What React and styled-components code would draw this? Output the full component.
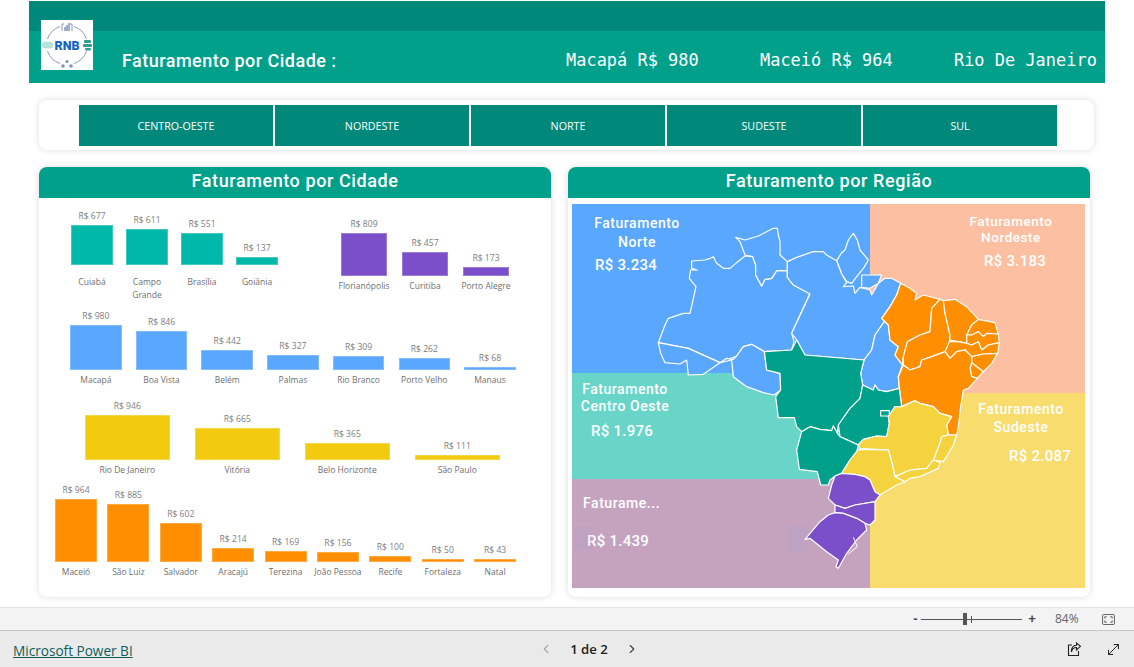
import React from "react"
import styled, { createGlobalStyle } from "styled-components"
import { ChevronLeft, ChevronRight, MoveDiagonal } from "lucide-react"

const teal = "#00a08b"
const darkTeal = "#00897b"
const blue = "#5aa7ff"
const orange = "#ff8f00"
const purple = "#7b4fc9"

const GlobalStyle = createGlobalStyle`
  html, body { margin: 0; padding: 0; background: #fff; }
  * { box-sizing: border-box; }
`

const Page = styled.div`
  width: 1134px;
  height: 667px;
  display: flex;
  flex-direction: column;
  overflow: hidden;
  font-family: "Open Sans", sans-serif;
`
const Main = styled.main`
  flex: 1;
  padding-top: 1px;
`
const Header = styled.header`
  position: relative;
  width: 1076px;
  height: 82px;
  margin-left: 29px;
  overflow: hidden;
  display: flex;
  flex-direction: column;
`
const HeaderTop = styled.div`
  height: 30px;
  background: ${darkTeal};
`
const HeaderBottom = styled.div`
  flex: 1;
  background: ${teal};
  display: flex;
  align-items: flex-start;
  color: #fff;
`
const HeaderTitle = styled.div`
  margin: 19px 0 0 93px;
  width: 444px;
  flex: none;
  font: 500 18px/22px Roboto, sans-serif;
  letter-spacing: 0.47px;
`
const Ticker = styled.div`
  margin-top: 18px;
  font: 400 16.9px/22px "DejaVu Sans Mono", monospace;
  letter-spacing: 0.04px;
  white-space: pre;
`
const LogoBox = styled.div`
  position: absolute;
  left: 12px;
  top: 19px;
  width: 52px;
  height: 50px;
  background: #fff;
`
const SlicerCard = styled.section`
  margin: 17px 0 0 39px;
  width: 1055px;
  height: 50px;
  padding: 5px 37px 0 40px;
  background: #fff;
  border-radius: 8px;
  box-shadow: 0 0 7px rgba(0, 0, 0, 0.14);
`
const SlicerRow = styled.div`
  display: grid;
  grid-template-columns: repeat(5, 1fr);
  gap: 2px;
  height: 41px;
`
const SlicerButton = styled.div`
  background: ${darkTeal};
  color: #fff;
  font-size: 10.7px;
  display: flex;
  align-items: center;
  justify-content: center;
`
const Cards = styled.div`
  display: flex;
  gap: 17px;
  margin: 17px 0 0 39px;
`
const Card = styled.section`
  width: ${p => p.$width}px;
  height: 430px;
  background: #fff;
  border-radius: 8px;
  box-shadow: 0 0 7px rgba(0, 0, 0, 0.14);
  display: flex;
  flex-direction: column;
`
const CardTitle = styled.h2`
  margin: 0;
  height: 31px;
  flex: none;
  background: ${teal};
  color: #fff;
  border-radius: 8px 8px 0 0;
  text-align: center;
  font: 500 18px/28px Roboto, sans-serif;
  letter-spacing: 0.58px;
`
const ChartArea = styled.div`
  padding-top: 10px;
`
const ChartRow = styled.div`
  display: flex;
  height: ${p => p.$height}px;
`
const Chart = styled.div`
  display: flex;
  margin-left: ${p => p.$left}px;
`
const Column = styled.div`
  width: ${p => p.$pitch}px;
  display: flex;
  flex-direction: column;
  align-items: center;
`
const Plot = styled.div`
  height: ${p => p.$height}px;
  flex: none;
  display: flex;
  flex-direction: column;
  justify-content: flex-end;
  align-items: center;
`
const BarValue = styled.div`
  font-size: 8.6px;
  line-height: 12px;
  margin-bottom: 3px;
  color: #7d7d7d;
  white-space: nowrap;
`
const Bar = styled.div`
  width: ${p => p.$width}px;
  flex: none;
  background: ${p => p.$color};
  box-shadow: inset 0 0 0 1px rgba(255, 255, 255, 0.25);
`
const BarLabel = styled.div`
  margin-top: ${p => p.$gap}px;
  font-size: 8.5px;
  line-height: 13px;
  color: #6f6f6f;
  text-align: center;
  white-space: pre;
`
const Treemap = styled.div`
  position: relative;
  margin: 6px 0 0 4px;
  width: 513px;
  height: 384px;
  display: flex;
`
const TileColumn = styled.div`
  width: ${p => p.$width}px;
  display: flex;
  flex-direction: column;
`
const Tile = styled.div`
  height: ${p => p.$height}px;
  background: ${p => p.$bg};
  padding: ${p => p.$top}px 0 0 ${p => p.$left}px;
  color: #fff;
`
const TileTitle = styled.div`
  width: 100px;
  font: 500 ${p => p.$size || 14}px/${p => p.$line}px Roboto, sans-serif;
  letter-spacing: 0.55px;
  white-space: nowrap;
  display: flex;
  flex-direction: column;
  align-items: ${p => (p.$start ? "flex-start" : "center")};
`
const TileValue = styled.div`
  margin: ${p => p.$gap}px 0 0 ${p => p.$indent}px;
  font: 500 15px/20px Roboto, sans-serif;
  letter-spacing: 0.25px;
`
const MapSvg = styled.svg`
  position: absolute;
  inset: 0;
  width: 513px;
  height: 384px;
`
const ZoomBar = styled.div`
  height: 23px;
  flex: none;
  background: #f3f3f3;
  border-top: 1px solid #e2e2e2;
  display: flex;
  align-items: center;
  padding-left: 910px;
  color: #444;
`
const ZoomSign = styled.span`
  width: ${p => p.$width}px;
  font: 700 13px/16px "Liberation Sans", sans-serif;
  text-align: center;
`
const Slider = styled.div`
  position: relative;
  width: 101px;
  height: 1px;
  background: #555;
`
const SliderThumb = styled.span`
  position: absolute;
  left: 42px;
  top: -6px;
  width: 4px;
  height: 12px;
  background: #555;
`
const SliderTick = styled.span`
  position: absolute;
  left: 50px;
  top: -3px;
  width: 1px;
  height: 7px;
  background: #555;
`
const ZoomPercent = styled.span`
  margin-left: 13px;
  width: 36px;
  font: 400 12px/16px "Open Sans", sans-serif;
  color: #666;
`
const FitIcon = styled.svg`
  margin-left: 11px;
  width: 13px;
  height: 11px;
`
const Footer = styled.footer`
  height: 37px;
  flex: none;
  background: #eaeaea;
  border-top: 1px solid #c8c8c8;
  display: grid;
  grid-template-columns: 539px 100px 1fr;
  align-items: center;
`
const BrandLink = styled.a`
  margin: 2px 0 0 13px;
  font-size: 13.6px;
  color: #0f5f58;
  text-decoration: underline;
  white-space: nowrap;
`
const Pager = styled.div`
  display: flex;
  align-items: center;
  justify-content: space-between;
  font-size: 13.2px;
  font-weight: 600;
  color: #222;
  svg:first-child { color: #a8a8a8; }
  svg:last-child { color: #444; }
`
const FooterActions = styled.div`
  display: flex;
  justify-content: flex-end;
  align-items: center;
  gap: 24px;
  padding-right: 12px;
  color: #222;
`

const Logo = () => (
  <svg viewBox="0 0 52 50" width="52" height="50">
    <g fill="none" stroke="#6b7fa8" strokeWidth="0.8">
      <path d="M19 6.500A20 20 0 0 0 6.500 19" />
      <path d="M33 6.500A20 20 0 0 1 45.500 19" />
      <path d="M6.500 31A20 20 0 0 0 19 43.500" />
      <path d="M45.500 31A20 20 0 0 1 33 43.500" />
      <path d="M21 11V4h2M29 4h2v7" />
    </g>
    <g fill="#3f5f95">
      <rect x="23.500" y="7" width="1" height="4" />
      <rect x="25.500" y="5" width="1" height="6" />
      <rect x="27.500" y="3" width="1" height="8" />
    </g>
    <g fill="#b4e2dc">
      <circle cx="4.500" cy="25" r="3.500" />
      <circle cx="8.500" cy="25" r="3.500" />
    </g>
    <rect x="43" y="20" width="7" height="3" rx="1" fill="#2f9e94" />
    <rect x="42" y="24" width="9" height="3" rx="1" fill="#2f9e94" />
    <rect x="44" y="28" width="6" height="2.500" rx="1" fill="#2f9e94" />
    <g fill="#8193b5">
      <circle cx="22" cy="46" r="1.800" />
      <circle cx="30" cy="46" r="1.800" />
      <circle cx="26" cy="41.500" r="1.600" />
    </g>
    <text x="26" y="30" textAnchor="middle" fontFamily="Roboto, sans-serif" fontWeight="900" fontSize="12.5" fill="#1565c0">RNB</text>
  </svg>
)

const charts = [
  [
    { left: 25.5, pitch: 55, barWidth: 42, plot: 57, gap: 9.5, color: "#00b8a9", scale: 0.059, items: [["Cuiabá", 677], ["Campo\nGrande", 611], ["Brasília", 551], ["Goiânia", 137]] },
    { left: 49, pitch: 61, barWidth: 46, plot: 68, gap: 2.5, color: purple, scale: 0.0531, items: [["Florianópolis", 809], ["Curitiba", 457], ["Porto Alegre", 173]] },
  ],
  [{ left: 24, pitch: 65.7, barWidth: 51.5, plot: 62, gap: 2.5, color: blue, scale: 0.0459, items: [["Macapá", 980], ["Boa Vista", 846], ["Belém", 442], ["Palmas", 327], ["Rio Branco", 309], ["Porto Velho", 262], ["Manaus", 68]] }],
  [{ left: 33.25, pitch: 110, barWidth: 84.5, plot: 60, gap: 2.5, color: "#f2ca0e", scale: 0.0476, items: [["Rio De Janeiro", 946], ["Vitória", 665], ["Belo Horizonte", 365], ["São Paulo", 111]] }],
  [{ left: 10.8, pitch: 52.4, barWidth: 42, plot: 79, gap: 2.5, color: orange, scale: 0.065, items: [["Maceió", 964], ["São Luiz", 885], ["Salvador", 602], ["Aracajú", 214], ["Terezina", 169], ["João Pessoa", 156], ["Recife", 100], ["Fortaleza", 50], ["Natal", 43]] }],
]
const rowHeights = [100, 92, 83, 100]

const northFill = blue
const northeastFill = orange
const centerFill = teal
const southeastFill = "#f5d33f"
const southFill = purple

// coordinates are 3x page pixels, measured from (570,200)
const states = [
  [northFill, "365,183 405,180 418,176 430,170 440,190 460,205 480,205 500,188 525,168 548,170 557,195 557,225 568,245 575,258 585,238 605,235 620,212 652,212 652,232 670,255 700,270 720,280 665,400 672,425 665,450 583,455 545,433 520,440 500,468 450,488 355,445 265,428 285,375 295,355 340,340 360,340 378,260 358,235 362,210 382,210 365,205"],
  [northFill, "265,428 355,445 450,488 400,523 355,525 350,480 330,492 285,488 272,460"],
  [northFill, "450,488 470,475 490,478 500,468 520,440 545,433 583,455 590,510 630,520 632,570 612,585 580,578 530,560 490,530 485,480"],
  [northFill, "497,112 525,120 565,108 610,85 622,85 625,105 630,125 630,165 652,185 652,212 620,212 605,235 585,238 575,258 557,225 557,195 548,170 525,165 510,125"],
  [northFill, "800,182 815,158 825,150 835,120 850,100 862,120 870,150 895,180 880,205 860,230 845,250 830,245 815,222"],
  [northFill, "652,185 680,172 730,155 760,155 770,165 800,182 815,222 830,248 820,260 850,258 855,280 870,262 900,270 905,285 925,250 945,235 965,235 992,250 980,285 960,320 935,355 945,362 915,405 905,450 882,480 705,465 680,420 665,400 720,282 670,255 652,232 652,212"],
  [northFill, "875,225 935,225 925,250 900,265 875,262"],
  [northFill, "935,355 945,362 915,405 905,450 882,480 872,520 878,555 910,570 915,555 925,570 950,575 988,565 985,530 997,495 975,465 985,440 960,420 955,375"],
  [northeastFill, "992,250 1020,265 1040,280 1035,300 1060,285 1110,298 1085,325 1080,395 1050,405 1012,425 1000,470 997,495 975,465 985,440 960,420 955,375 935,355 960,320 980,285"],
  [northeastFill, "1110,298 1120,302 1125,340 1140,405 1138,430 1125,455 1085,470 1055,480 1050,500 1020,510 1000,495 1000,470 1012,425 1050,405 1080,395 1085,325"],
  [northeastFill, "1120,302 1155,298 1190,320 1225,358 1205,375 1190,405 1190,430 1165,425 1140,420 1140,405 1125,340"],
  [northeastFill, "1225,358 1275,368 1285,402 1250,400 1240,410 1225,395 1205,405 1190,405 1205,375"],
  [northeastFill, "1190,405 1205,405 1225,395 1240,410 1250,400 1285,402 1288,428 1255,435 1235,450 1225,425 1205,435 1190,430"],
  [northeastFill, "1138,425 1165,425 1190,430 1205,435 1225,425 1235,450 1255,435 1288,428 1283,460 1240,462 1205,470 1185,450 1160,455 1140,475 1125,455"],
  [northeastFill, "1205,470 1240,462 1283,460 1265,490 1240,515 1205,488"],
  [northeastFill, "1205,488 1240,515 1222,535 1205,530 1200,505"],
  [northeastFill, "1000,495 1020,510 1050,500 1055,480 1085,470 1125,455 1140,475 1160,455 1185,450 1205,470 1205,488 1200,505 1205,530 1222,535 1195,565 1180,570 1172,620 1165,680 1160,705 1135,705 1130,675 1145,650 1110,640 1090,620 1050,610 1035,602 995,620 988,565 985,530"],
  [centerFill, "583,455 665,450 680,420 705,465 882,480 872,520 878,555 870,595 840,625 805,675 802,700 790,678 785,692 750,688 720,680 695,695 680,680 673,653 625,653 617,590 632,570 630,520 590,510"],
  [centerFill, "878,555 910,570 915,555 925,570 950,575 988,565 995,620 975,620 955,650 958,670 950,710 920,708 880,718 865,735 810,710 805,675 840,625 870,595"],
  [centerFill, "932,632 958,632 958,648 932,648"],
  [centerFill, "695,695 720,680 750,688 785,692 790,678 802,700 810,710 865,735 860,755 840,780 815,820 795,828 780,840 775,855 752,855 742,815 688,808 680,750"],
  [southeastFill, "995,620 1035,602 1050,610 1090,620 1110,640 1145,650 1130,675 1135,705 1115,710 1110,730 1090,780 1070,805 1020,810 975,830 965,785 955,750 870,745 865,735 880,718 920,708 950,710 958,670 955,650 975,620"],
  [southeastFill, "1135,705 1160,705 1148,740 1120,785 1090,780 1110,730 1115,710"],
  [southeastFill, "1090,780 1110,788 1105,805 1050,830 1020,835 1005,845 975,830 1020,810 1070,805"],
  [southeastFill, "865,748 955,750 965,785 975,830 1005,845 980,855 930,885 915,875 900,840 885,830 855,823 815,820 840,780"],
  [southFill, "815,820 855,823 885,830 900,840 915,875 930,885 915,905 855,915 825,925 795,915 775,895 785,855 795,828"],
  [southFill, "795,915 825,925 855,915 915,905 915,960 900,975 885,970 860,955 820,940 795,938"],
  [southFill, "795,938 820,940 860,955 885,970 890,990 860,1020 830,1060 805,1105 798,1100 805,1080 770,1055 745,1035 720,1015 705,1018 750,965 775,945"],
]

const BrazilMap = () => (
  <MapSvg viewBox="6 12 1539 1152">
    <rect x="654" y="975" width="57" height="81" fill="#96a0d2" opacity="0.12" />
    <rect x="15" y="981" width="51" height="69" fill="#96a0d2" opacity="0.12" />
    {states.map(([fill, points]) => (
      <polygon key={points} points={points} fill={fill} stroke="#fff" strokeWidth="3.6" strokeLinejoin="round" />
    ))}
    <path d="M850 1012L862 1040L835 1062" fill="none" stroke="#fff" strokeWidth="3" />
  </MapSvg>
)

const BarChart = ({ chart }) => (
  <Chart $left={chart.left}>
    {chart.items.map(([name, value]) => (
      <Column key={name} $pitch={chart.pitch}>
        <Plot $height={chart.plot}>
          <BarValue>R$ {value}</BarValue>
          <Bar $width={chart.barWidth} $color={chart.color} style={{ height: value * chart.scale }} />
        </Plot>
        <BarLabel $gap={chart.gap}>{name}</BarLabel>
      </Column>
    ))}
  </Chart>
)

export default function App() {
  return (
    <Page>
      <GlobalStyle />
      <Main>
        <Header>
          <HeaderTop />
          <HeaderBottom>
            <HeaderTitle>Faturamento por Cidade :</HeaderTitle>
            <Ticker>{"Macapá R$ 980      Maceió R$ 964      Rio De Janeiro"}</Ticker>
          </HeaderBottom>
          <LogoBox><Logo /></LogoBox>
        </Header>

        <SlicerCard>
          <SlicerRow>
            {["CENTRO-OESTE", "NORDESTE", "NORTE", "SUDESTE", "SUL"].map(r => (
              <SlicerButton key={r}>{r}</SlicerButton>
            ))}
          </SlicerRow>
        </SlicerCard>

        <Cards>
          <Card $width={512}>
            <CardTitle>Faturamento por Cidade</CardTitle>
            <ChartArea>
              {charts.map((row, i) => (
                <ChartRow key={i} $height={rowHeights[i]}>
                  {row.map((chart, j) => <BarChart key={j} chart={chart} />)}
                </ChartRow>
              ))}
            </ChartArea>
          </Card>
          <Card $width={522}>
            <CardTitle>Faturamento por Região</CardTitle>
            <Treemap>
              <TileColumn $width={298}>
                <Tile $height={169} $bg={blue} $top={9.5} $left={15}>
                  <TileTitle $line={19}><span>Faturamento</span><span>Norte</span></TileTitle>
                  <TileValue $gap={3.5} $indent={8}>R$ 3.234</TileValue>
                </Tile>
                <Tile $height={106} $bg="#69d5c9" $top={7.5} $left={3}>
                  <TileTitle $line={17}><span>Faturamento</span><span>Centro Oeste</span></TileTitle>
                  <TileValue $gap={6.5} $indent={16}>R$ 1.976</TileValue>
                </Tile>
                <Tile $height={109} $bg="#c5a3bf" $top={15} $left={11}>
                  <TileTitle $line={18} $start><span>Faturame...</span></TileTitle>
                  <TileValue $gap={19} $indent={4}>R$ 1.439</TileValue>
                </Tile>
              </TileColumn>
              <TileColumn $width={215}>
                <Tile $height={189} $bg="#fdbfa2" $top={9} $left={91}>
                  <TileTitle $line={16} $size={13.5}><span>Faturamento</span><span>Nordeste</span></TileTitle>
                  <TileValue $gap={6} $indent={23}>R$ 3.183</TileValue>
                </Tile>
                <Tile $height={195} $bg="#f8dc6e" $top={7} $left={101}>
                  <TileTitle $line={18}><span>Faturamento</span><span>Sudeste</span></TileTitle>
                  <TileValue $gap={10} $indent={38}>R$ 2.087</TileValue>
                </Tile>
              </TileColumn>
              <BrazilMap />
            </Treemap>
          </Card>
        </Cards>
      </Main>

      <ZoomBar>
        <ZoomSign $width={11}>-</ZoomSign>
        <Slider><SliderThumb /><SliderTick /></Slider>
        <ZoomSign $width={20}>+</ZoomSign>
        <ZoomPercent>84%</ZoomPercent>
        <FitIcon viewBox="0 0 14 12" fill="none" stroke="#555">
          <rect x="0.5" y="0.5" width="13" height="11" rx="1.5" />
          <path d="M3 5V3h2M9 3h2v2M11 7v2H9M5 9H3V7" />
        </FitIcon>
      </ZoomBar>
      <Footer>
        <BrandLink>Microsoft Power BI</BrandLink>
        <Pager>
          <ChevronLeft size={14} />
          <span>1 de 2</span>
          <ChevronRight size={14} />
        </Pager>
        <FooterActions>
          <svg width="14" height="15" viewBox="0 0 14 15" fill="none" stroke="#222" strokeWidth="1.1">
            <path d="M5 3H1.500v10.500h10V9" />
            <path d="M4.500 10c.5-3 2.500-4.500 5-4.500V8l4-3.700-4-3.300v2.300C6 3.500 4 6 4.500 10z" />
          </svg>
          <MoveDiagonal size={17} strokeWidth={1.4} />
        </FooterActions>
      </Footer>
    </Page>
  )
}
